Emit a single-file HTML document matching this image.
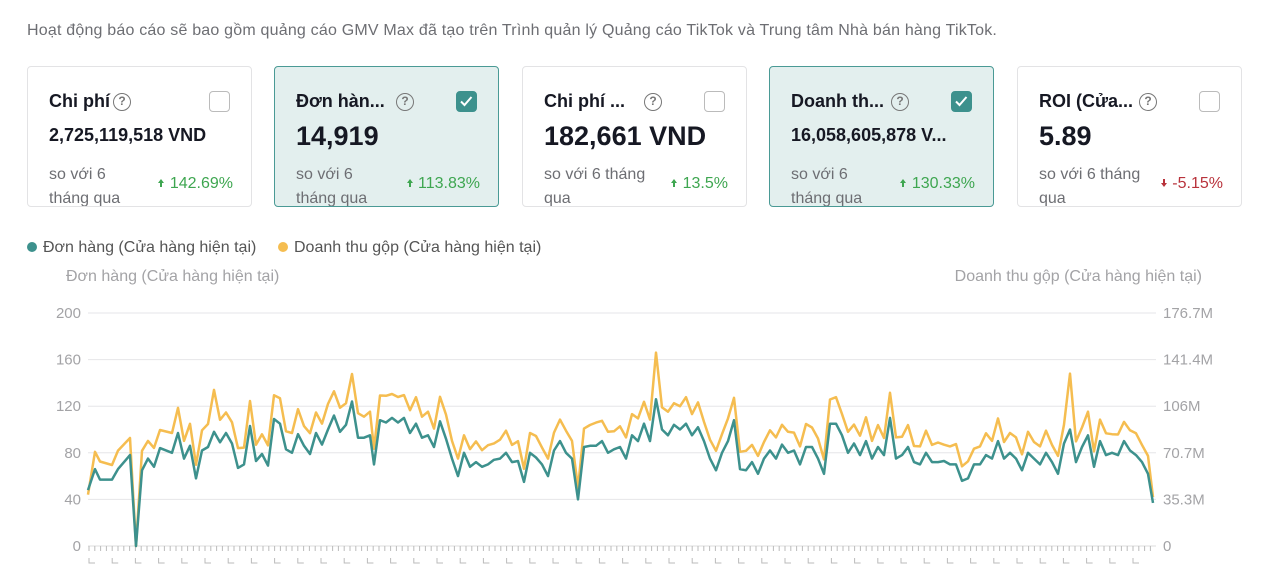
<!DOCTYPE html>
<html><head><meta charset="utf-8"><style>
*{box-sizing:border-box;margin:0;padding:0}
body{width:1264px;height:564px;overflow:hidden;background:#fff;font-family:"Liberation Sans",sans-serif;color:#161823;position:relative}
.top{position:absolute;left:27px;top:22px;font-size:16px;color:#6d6e73;letter-spacing:0.2px;white-space:nowrap}
.card{position:absolute;top:66px;width:225px;height:141px;border:1px solid #e3e3e5;border-radius:4px;background:#fff;overflow:hidden}
.card.sel{background:#e3efee;border-color:#4a9a95}
.t{position:absolute;left:21px;top:24px;font-size:18px;font-weight:bold;color:#161823}
.q{position:absolute;top:26px;width:18px;height:18px;border:1.5px solid #777;border-radius:50%;font-size:12px;font-weight:bold;color:#777;text-align:center;line-height:15px}
.cb{position:absolute;right:21px;top:24px;width:21px;height:21px;border:1.5px solid #bbb;border-radius:4px;background:#fff}
.sel .cb{background:#3d918d;border-color:#3d918d}
.v{position:absolute;left:21px;font-weight:bold;color:#161823}
.v.s{top:58px;font-size:18px}
.v.b{top:54px;font-size:27px;font-weight:bold}
.cmp{position:absolute;left:21px;top:96px;font-size:16px;color:#6d6e73;line-height:24px}
.pct{position:absolute;right:18px;top:108px;font-size:16px;color:#3ea650}
.pct.r{color:#b8323b}
.leg{position:absolute;top:239px;font-size:16px;color:#555;white-space:nowrap}
.dot{display:inline-block;width:10px;height:10px;border-radius:50%;margin-right:6px;vertical-align:0}
.ax{position:absolute;font-size:16px;color:#a3a3a6;white-space:nowrap}
</style></head><body>
<div class="top">Hoạt động báo cáo sẽ bao gồm quảng cáo GMV Max đã tạo trên Trình quản lý Quảng cáo TikTok và Trung tâm Nhà bán hàng TikTok.</div>

<div class="card" style="left:27px"><div class="t">Chi phí</div><div class="q" style="left:85px">?</div><div class="cb"></div><div class="v s">2,725,119,518 VND</div><div class="cmp">so với 6<br>tháng qua</div><div class="pct"><svg width="8" height="10" viewBox="0 0 8 10"><path d="M4 1L1 5h2v4h2V5h2z" fill="#3ea650"/></svg> 142.69%</div></div>
<div class="card sel" style="left:274px"><div class="t">Đơn hàn...</div><div class="q" style="left:121px">?</div><div class="cb"><svg width="18" height="18" viewBox="0 0 18 18"><path d="M4 9.5l3.5 3.5 7-8" stroke="#fff" stroke-width="2" fill="none"/></svg></div><div class="v b">14,919</div><div class="cmp">so với 6<br>tháng qua</div><div class="pct"><svg width="8" height="10" viewBox="0 0 8 10"><path d="M4 1L1 5h2v4h2V5h2z" fill="#3ea650"/></svg> 113.83%</div></div>
<div class="card" style="left:522px"><div class="t">Chi phí ...</div><div class="q" style="left:121px">?</div><div class="cb"></div><div class="v b">182,661 VND</div><div class="cmp">so với 6 tháng<br>qua</div><div class="pct"><svg width="8" height="10" viewBox="0 0 8 10"><path d="M4 1L1 5h2v4h2V5h2z" fill="#3ea650"/></svg> 13.5%</div></div>
<div class="card sel" style="left:769px"><div class="t">Doanh th...</div><div class="q" style="left:121px">?</div><div class="cb"><svg width="18" height="18" viewBox="0 0 18 18"><path d="M4 9.5l3.5 3.5 7-8" stroke="#fff" stroke-width="2" fill="none"/></svg></div><div class="v s">16,058,605,878 V...</div><div class="cmp">so với 6<br>tháng qua</div><div class="pct"><svg width="8" height="10" viewBox="0 0 8 10"><path d="M4 1L1 5h2v4h2V5h2z" fill="#3ea650"/></svg> 130.33%</div></div>
<div class="card" style="left:1017px"><div class="t">ROI (Cửa...</div><div class="q" style="left:121px">?</div><div class="cb"></div><div class="v b">5.89</div><div class="cmp">so với 6 tháng<br>qua</div><div class="pct r"><svg width="8" height="10" viewBox="0 0 8 10"><path d="M4 9L1 5h2V1h2v4h2z" fill="#b8323b"/></svg> -5.15%</div></div>

<div class="leg" style="left:27px"><span class="dot" style="background:#3d918d"></span>Đơn hàng (Cửa hàng hiện tại)</div>
<div class="leg" style="left:278px"><span class="dot" style="background:#f5bd50"></span>Doanh thu gộp (Cửa hàng hiện tại)</div>
<div class="ax" style="left:66px;top:268px">Đơn hàng (Cửa hàng hiện tại)</div>
<div class="ax" style="right:62px;top:268px">Doanh thu gộp (Cửa hàng hiện tại)</div>

<svg id="ch" width="1264" height="564" style="position:absolute;left:0;top:0"></svg>
<script>
var s=document.getElementById('ch'),h='';
var L=['200','160','120','80','40','0'],R=['176.7M','141.4M','106M','70.7M','35.3M','0'];
for(var i=0;i<6;i++){var y=313+i*46.6;
 if(i<5)h+='<line x1="88" x2="1156" y1="'+y+'" y2="'+y+'" stroke="#e6e6e8"/>';
 h+='<text x="81" y="'+(y+5)+'" text-anchor="end" font-size="15" fill="#a3a3a6" font-family="Liberation Sans">'+L[i]+'</text>';
 h+='<text x="1163" y="'+(y+5)+'" font-size="15" fill="#a3a3a6" font-family="Liberation Sans">'+R[i]+'</text>';}
h+='<line x1="88" x2="1156" y1="546" y2="546" stroke="#ddd"/>';
for(var x=89;x<1156;x+=5.8)h+='<line x1="'+x+'" x2="'+x+'" y1="546" y2="551" stroke="#bbb"/>';
for(var x=89;x<1156;x+=23.2)h+='<path d="M'+x+' 558v5h6" stroke="#bbb" fill="none"/>';
var T=[[88,48],[95,66],[100,57],[112,57],[118,66],[130,78],[136,0],[142,65],[148,75],[154,68],[160,84],[172,80],[178,97],[184,75],[190,86],[196,58],[202,82],[208,85],[214,98],[220,89],[226,97],[232,88],[238,67],[244,70],[250,103],[256,73],[262,79],[268,69],[274,109],[280,105],[286,83],[292,80],[298,96],[304,86],[310,79],[316,97],[322,87],[328,100],[334,112],[340,98],[346,104],[352,124],[358,93],[364,93],[370,95],[374,70],[380,108],[386,106],[392,110],[398,106],[404,110],[410,97],[416,105],[422,93],[428,95],[434,85],[440,107],[446,92],[452,75],[458,60],[464,80],[470,68],[476,72],[482,68],[488,70],[494,74],[500,75],[506,80],[512,72],[518,73],[524,55],[530,80],[536,76],[542,70],[548,60],[554,82],[560,90],[566,80],[572,75],[578,40],[584,85],[590,86],[596,86],[602,90],[608,80],[614,83],[620,85],[626,75],[632,95],[638,90],[644,105],[650,90],[656,126],[662,100],[668,95],[674,104],[680,100],[686,105],[692,95],[698,102],[704,90],[710,75],[716,65],[722,80],[728,90],[734,108],[740,66],[746,65],[752,72],[758,62],[764,75],[770,82],[776,75],[782,87],[788,80],[794,82],[800,70],[806,85],[812,85],[818,75],[824,62],[830,105],[836,105],[842,95],[848,80],[854,88],[860,78],[866,90],[872,75],[878,85],[884,78],[890,110],[896,75],[902,78],[908,85],[914,72],[920,70],[926,80],[932,72],[938,72],[944,73],[950,70],[956,70],[962,56],[968,58],[974,70],[980,70],[986,78],[992,75],[998,90],[1004,75],[1010,80],[1016,75],[1022,65],[1028,80],[1034,75],[1040,70],[1046,80],[1052,72],[1058,62],[1064,88],[1070,100],[1076,72],[1082,85],[1088,95],[1094,68],[1100,90],[1106,78],[1112,80],[1118,78],[1124,90],[1130,82],[1136,78],[1142,72],[1148,62],[1153,37]];
function Y(v){return 546-v*1.165}
var pt='',py='';
T.forEach(function(p,i){pt+=p[0]+','+Y(p[1]).toFixed(1)+' ';
 var v=p[1]===0?0:p[1]*1.15+3+((i*7)%5);
 if(p[0]==214)v=134;if(p[0]==656)v=166;if(p[0]==1070)v=148;if(p[0]==88)v=44;if(p[0]==1153)v=42;if(p[0]==578)v=50;
 py+=p[0]+','+Y(v).toFixed(1)+' ';});
h+='<polyline points="'+py+'" fill="none" stroke="#f5bd50" stroke-width="2.5" stroke-linejoin="round"/>';
h+='<polyline points="'+pt+'" fill="none" stroke="#3d918d" stroke-width="2.5" stroke-linejoin="round"/>';
s.innerHTML=h;
</script>
</body></html>
